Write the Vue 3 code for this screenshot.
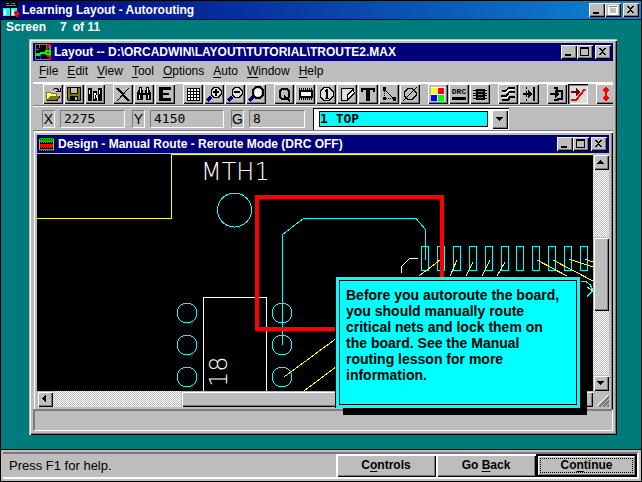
<script setup>
import { ref } from 'vue'

const K = '#000'
const layer = ref('1 TOP')

const menus = [
  ['F', 'ile'], ['E', 'dit'], ['V', 'iew'], ['T', 'ool'],
  ['O', 'ptions'], ['A', 'uto'], ['W', 'indow'], ['H', 'elp'],
]

const lens = [
  { d: 'M7 13L3 17', s: '#00007b', w: 3 },
  { d: 'M10 3.5h4l3 3v4l-3 3h-4l-3-3v-4z', f: '#dedede', s: K, w: 1 },
]

const groups = [
  [
    { label: 'Open', p: [
      { d: 'M3.5 8.5h4l1 1h5v3h-6l-4 4z', f: '#ffff7b', s: '#7b7b00', w: 1 },
      { d: 'M7 12h10l-3 5H3z', f: '#7b7b00' },
      { d: 'M4 16.5h10l3-4', s: K, w: 1 },
      { d: 'M10 6l2-2h2l2 3M17 4v3h-4', s: K, w: 1 } ] },
    { label: 'Save', p: [
      { d: 'M3.5 3.5h13v13h-12l-1-1z', f: '#7b7b00', s: K, w: 1 },
      { d: 'M6.5 3.5h7v6h-7z', f: '#bdbdbd', s: K, w: 1 },
      { d: 'M6 12h8v5H6z', f: K },
      { d: 'M11 13h2v3h-2z', f: '#bdbdbd' } ] },
    { label: 'Library', p: [
      { d: 'M3 4h4v13H3zM8 7h4v10H8zM13 4h4v13h-4z', f: K },
      { d: 'M4 6h1v4H4zM9 9h1v6H9zM14 6h1v4h-1z', f: '#fff' },
      { d: 'M10 9l3 7', s: '#fff', w: 1 } ] },
  ],
  [
    { label: 'Delete', p: [
      { d: 'M4 4L16 17', s: K, w: 2 }, { d: 'M16 4L4 17', s: K, w: 1 } ] },
    { label: 'Find', p: [
      { d: 'M5 3h3v3h1v3h2V6h1V3h3v3h1l1 4v6h-5v-5H9v5H3v-6l1-4h1z', f: K },
      { d: 'M6.500 4v5M5.500 11v4M13.500 4v5M14.500 11v4', s: '#fff', w: 1 } ] },
    { label: 'Edit', p: [ { d: 'M4 3h12v3H8v3h6v2H8v3h8v3H4z', f: K } ] },
  ],
  [
    { label: 'Spreadsheet', p: [
      { d: 'M4.500 4.500h12v12h-12z', f: '#fff', s: K, w: 1 },
      { d: 'M7.500 4v12M10.500 4v12M13.500 4v12M4 7.500h12M4 10.500h12M4 13.500h12', s: K, w: 1 } ] },
    { label: 'Zoom in', p: [ ...lens, { d: 'M11 5h2v2h2v2h-2v3h-2V9H9V7h2z', f: K } ] },
    { label: 'Zoom out', p: [ ...lens, { d: 'M9 7h6v2H9z', f: K } ] },
    { label: 'Zoom all', p: [
      { d: 'M7 13L3 17', s: '#00007b', w: 3 },
      { d: 'M10 3h4l3 3v5l-3 3h-4l-3-3V6z', s: K, w: 2 },
      { d: 'M9 5h6v7H9z', f: '#fff' } ] },
  ],
  [
    { label: 'Query', p: [
      { d: 'M8 5h5l2 2v6l-2 2H8l-2-2V7z', s: K, w: 2 },
      { d: 'M10 12l6 5', s: K, w: 2 } ] },
    { label: 'Component', p: [
      { d: 'M4.500 7h12v6h-12z', f: '#fff', s: K, w: 2 },
      { d: 'M4.500 4v3M6.500 4v3M8.500 4v3M10.500 4v3M12.500 4v3M14.500 4v3M16.500 4v3M4.500 13v3M6.500 13v3M8.500 13v3M10.500 13v3M12.500 13v3M14.500 13v3M16.500 13v3', s: K, w: 1 } ] },
    { label: 'Pin', p: [
      { d: 'M8 3.500h5l4 4v5l-4 4H8l-4-4v-5z', f: '#dedede', s: K, w: 1 },
      { d: 'M10 5h2v9h1v1H9v-1h1V8H9V6h1z', f: K } ] },
    { label: 'Obstacle', p: [
      { d: 'M4.500 4.500h12v6l-6 6h-6z', f: '#dedede', s: K, w: 1 },
      { d: 'M10.500 15v-4l5-5 2 3-5 5z', f: '#fff', s: K, w: 1 } ] },
    { label: 'Text', p: [ { d: 'M3 4h14v4h-2V6h-3v11H8V6H5v2H3z', f: K } ] },
    { label: 'Connection', p: [
      { d: 'M4 3h3v4H4zM4 13h3v3H4zM14 13h3v4h-3z', f: K },
      { d: 'M5.500 7v6M7 14.500h7', s: K, w: 1, dash: '1 1' },
      { d: 'M6 6l9 9', s: K, w: 1 } ] },
    { label: 'Error', p: [
      { d: 'M8 4.500h4l4 4v3l-4 4H8l-4-4v-3z', s: K, w: 1 }, { d: 'M3 17L17 3', s: K, w: 1 } ] },
  ],
  [
    { label: 'Color', p: [
      { d: 'M3 3h14v14H3z', f: '#fff' },
      { d: 'M3 4h6v6H3z', f: '#ff0' }, { d: 'M10 4h6v6h-6z', f: '#f00' },
      { d: 'M3 11h6v6H3z', f: '#00f' }, { d: 'M10 11h6v6h-6z', f: '#0f0' } ] },
    { label: 'Online DRC', text: 'DRC', p: [ { d: 'M3 13h14v3H3z', f: K } ] },
    { label: 'Reconnect', p: [
      { d: 'M6 5h9v11H6z', f: K },
      { d: 'M3 6.500h14M3 9.500h14M3 11.500h14M3 14.500h14', s: K, w: 1 },
      { d: 'M8 7.500h5M8 10.500h5M8 13.500h5', s: '#7b7b7b', w: 1 } ] },
  ],
  [
    { label: 'Auto path', p: [
      { d: 'M4 7h4l3-3h6M3 12h5l4-4h5M4 16h6l2-3h5', s: K, w: 2 },
      { d: 'M4 8.500h4l3-3h5M4 13.500h5l3-4h4', s: '#fff', w: 1 } ] },
    { label: 'Shove track', p: [
      { d: 'M7.500 3v14', s: K, w: 1, dash: '2 2' }, { d: 'M15 3v14', s: K, w: 2 },
      { d: 'M4 10h6', s: K, w: 2 }, { d: 'M9 6l5 4-5 4z', f: K } ] },
  ],
  [
    { label: 'Edit segment', p: [
      { d: 'M7 4h3v3h5v8h-4v1H7', s: K, w: 2 },
      { d: 'M3 10h6', s: K, w: 2 }, { d: 'M8 6l4 4-4 4z', f: K } ] },
    { label: 'Add or edit route', on: true, p: [
      { d: 'M3 16h5L17 5', s: '#f00', w: 2 },
      { d: 'M3 8h6', s: '#7b0000', w: 2 }, { d: 'M8 4l5 4-5 4z', f: '#7b0000' } ] },
  ],
  [
    { label: 'Design rule check', p: [
      { d: 'M9 3h2v1h1v1h1v2h-1v1h-1v4h1v1h1v2h-1v1h-1v1H9v-1H8v-1H7v-2h1v-1h1V8H8V7H7V5h1V4h1z', f: '#f00' } ] },
  ],
]

const pads = [421, 437, 453, 469, 485, 501, 516, 532, 548, 564, 580]
const pinRows = [313, 345, 377]
const rats = [
  'M419 276L440 260', 'M450 276L457 260', 'M466 276L473 262', 'M482 276L490 260',
  'M497 276L505 262', 'M537 260L567 276', 'M553 260L593 281', 'M569 259L593 267',
  'M585 259L593 262', 'M587 287L593 291', 'M284 377L345 332', 'M304 391L345 360',
]
const captions = [
  { label: 'Minimize', d: 'M4 9h6v2H4z' },
  { label: 'Maximize', d: 'M3 2h9v9H3zM4 4v6h7V4z' },
  { label: 'Close', d: 'M4 3h2v1h1v1h1V4h1V3h2v1h-1v1H9v1H8v1h1v1h1v1h1v1H9V9H8V8H7v1H6v1H4V9h1V8h1V7h1V6H6V5H5V4H4z' },
]
</script>

<template>
  <div class="app">
    <header class="title main-title">
      <svg class="ticon" viewBox="0 0 16 16" shape-rendering="crispEdges">
        <path fill="#000" d="M2 0h13v16H2z" />
        <path fill="#7b7b7b" d="M3 1h3v1H3zM8 1h4v1H8zM3 3h10v1H3z" />
        <path fill="#0ff" d="M0 6h7v8H0zM8 6h6v8H8z" />
        <path fill="#fff" d="M1 7h2v6H1zM9 7h2v6H9z" />
        <path fill="#f00" d="M12 9h3v1h1v3h-1v2h-2v-1h-1v-2h-1v-2h1z" />
      </svg>
      <h1>Learning Layout - Autorouting</h1>
      <div class="captions">
        <button v-for="c in captions" :key="c.label" type="button" :aria-label="c.label" :class="{ dim: c.label === 'Maximize' }">
          <svg viewBox="0 0 16 14" shape-rendering="crispEdges"><path :d="c.d" fill-rule="evenodd" /></svg>
        </button>
      </div>
    </header>

    <main class="desktop">
      <p class="progress"><span>Screen</span><span>7</span><span>of 11</span></p>

      <section class="window">
        <div class="title">
          <svg class="ticon" viewBox="0 0 16 16" shape-rendering="crispEdges">
            <path fill="#7b7b7b" d="M0 0h16v16H0z" />
            <path fill="#000" d="M1 1h13v8H1zM1 10h4v5H1zM6 10h8v5H6z" />
            <path fill="#7b7b7b" d="M4 1h1v3H4zM11 1h1v4h-1zM1 5h3v1H1z" />
            <path fill="none" stroke="#0f0" stroke-width="2" d="M0 11h4l2-2h5M11 7h4v3h-4z" />
            <path fill="none" stroke="#f00" stroke-width="2" d="M15 0l-3 4v2M11 11l4 2v3" />
            <path fill="none" stroke="#00f" stroke-width="2" d="M4 14l3-3" />
          </svg>
          <h2>Layout -- D:\ORCADWIN\LAYOUT\TUTORIAL\TROUTE2.MAX</h2>
          <div class="captions">
            <button v-for="c in captions" :key="c.label" type="button" :aria-label="c.label">
              <svg viewBox="0 0 16 14" shape-rendering="crispEdges"><path :d="c.d" fill-rule="evenodd" /></svg>
            </button>
          </div>
        </div>

        <nav class="menu">
          <a v-for="m in menus" :key="m[1]" href="#"><u>{{ m[0] }}</u>{{ m[1] }}</a>
        </nav>

        <div class="toolbar">
          <div v-for="(g, i) in groups" :key="i" class="group">
            <button v-for="t in g" :key="t.label" type="button" class="tool" :class="{ on: t.on }" :aria-label="t.label">
              <svg viewBox="1 1 18 18" shape-rendering="crispEdges">
                <path
                  v-for="(s, j) in t.p" :key="j" :d="s.d" :fill="s.f || 'none'" :stroke="s.s || 'none'"
                  :stroke-width="s.w || 0" :stroke-dasharray="s.dash"
                />
                <text v-if="t.text" x="10" y="10" text-anchor="middle" class="tooltext">{{ t.text }}</text>
              </svg>
            </button>
          </div>
        </div>

        <div class="fields">
          <label class="tag" for="fx">X</label>
          <input id="fx" class="coord" value="2275" readonly>
          <label class="tag next" for="fy">Y</label>
          <input id="fy" class="coord wide" value="4150" readonly>
          <label class="tag next" for="fg">G</label>
          <input id="fg" class="coord small" value="8" readonly>
          <div class="combo">
            <select v-model="layer" aria-label="Layer">
              <option value="1 TOP">1 TOP</option>
            </select>
            <span class="drop"><svg viewBox="0 0 16 18" shape-rendering="crispEdges"><path d="M4 7h7v1h-1v1H9v1H8v1H7v-1H6V9H5V8H4z" /></svg></span>
          </div>
        </div>

        <section class="child">
          <div class="title">
            <svg class="ticon" viewBox="0 0 16 16" shape-rendering="crispEdges">
              <path fill="#000" d="M1 1h15v15H1z" />
              <path fill="#00bd00" d="M1 2h14v5H1zM1 13h14v2H1z" />
              <path fill="#f00" d="M1 8h14v4H1z" />
              <path stroke="#000" stroke-dasharray="1 1" d="M1 3.500h14M1 6.500h14M1 11.500h14M1 14.500h14" />
              <path fill="#bdbd00" d="M0 3h1v11H0zM14 3h1v11h-1z" />
            </svg>
            <h2>Design - Manual Route - Reroute Mode (DRC OFF)</h2>
            <div class="captions">
              <button v-for="c in captions" :key="c.label" type="button" :aria-label="c.label">
                <svg viewBox="0 0 16 14" shape-rendering="crispEdges"><path :d="c.d" fill-rule="evenodd" /></svg>
              </button>
            </div>
          </div>

          <div class="view">
            <div class="board">
              <svg width="100%" height="100%" shape-rendering="crispEdges" fill="none">
                <g transform="translate(-37 -154)">
                  <path stroke="#ff0" d="M37 218.500H171.500V154.500H2000" />
                  <g fill="#fff" class="silk">
                    <text x="201" y="180">MTH1</text>
                    <text transform="translate(227 387) rotate(-90)">18</text>
                  </g>
                  <path stroke="#fff" d="M203.500 400V297.500H266.500V400M401.500 273V266.500L409.500 258.500H418" />
                  <g stroke="#0ff">
                    <circle cx="234.500" cy="210" r="17" />
                    <template v-for="y in pinRows" :key="y">
                      <circle cx="187" :cy="y" r="10" />
                      <circle cx="282" :cy="y" r="10" />
                    </template>
                    <rect v-for="x in pads" :key="x" :x="x + 0.5" y="246.500" width="7" height="24" />
                    <path d="M282.500 345V234.500L303.500 218.500H416L425.500 229.500V260" />
                    <path d="M581 281.500h5l4 3 2 4v3l-5 5" />
                  </g>
                  <path v-for="r in rats" :key="r" :d="r" stroke="#ff0" />
                  <rect x="257" y="197" width="185" height="132" stroke="#f00" stroke-width="4" />
                </g>
              </svg>
            </div>
            <div class="vbar">
              <button type="button" class="arrow" aria-label="Scroll up"><svg viewBox="0 0 16 16" shape-rendering="crispEdges"><path d="M7 6h1v1h1v1h1v1h1v1H4V9h1V8h1V7h1z" /></svg></button>
              <span class="vthumb"></span>
              <button type="button" class="arrow" aria-label="Scroll down"><svg viewBox="0 0 16 16" shape-rendering="crispEdges"><path d="M4 6h7v1h-1v1H9v1H8v1H7V9H6V8H5V7H4z" /></svg></button>
            </div>
            <div class="hbar">
              <button type="button" class="arrow" aria-label="Scroll left"><svg viewBox="0 0 16 16" shape-rendering="crispEdges"><path d="M8 4h1v7H8v-1H7V9H6V8H5V7h1V6h1V5h1z" /></svg></button>
              <span class="hthumb"></span>
              <button type="button" class="arrow" aria-label="Scroll right"><svg viewBox="0 0 16 16" shape-rendering="crispEdges"><path d="M6 4h1v1h1v1h1v1h1v1H9v1H8v1H7v1H6z" /></svg></button>
            </div>
            <svg class="grip" viewBox="0 0 16 16" shape-rendering="crispEdges">
              <path stroke="#fff" d="M4 15L15 4M8 15l7-7M12 15l3-3" />
              <path stroke="#7b7b7b" stroke-width="2" d="M6 16L16 6M10 16l6-6M14 16l2-2" />
            </svg>
          </div>

          <aside class="note">
            <p>Before you autoroute the board, you should manually route critical nets and lock them on the board. See the Manual routing lesson for more information.</p>
          </aside>
        </section>

        <div class="status"></div>
      </section>
    </main>

    <footer class="footer">
      <p>Press F1 for help.</p>
      <button type="button">C<u>o</u>ntrols</button>
      <button type="button">Go <u>B</u>ack</button>
      <button type="button" class="default"><span>Co<u>n</u>tinue</span></button>
    </footer>
  </div>
</template>

<style>
body { margin: 0; }
</style>

<style scoped>
* { box-sizing: border-box; }
.app {
  display: flex;
  flex-direction: column;
  min-height: 100vh;
  border: 1px solid #000;
  background: #007b7b;
  color: #000;
  font-family: "Liberation Sans", Arial, sans-serif;
  font-size: 12px;
}
h1, h2, p { margin: 0; font-size: 12px; }
button { padding: 0; border: 0; background: #bdbdbd; color: #000; font-family: inherit; }
svg { display: block; }

.title {
  display: flex;
  align-items: center;
  gap: 3px;
  height: 18px;
  padding: 0 2px;
  background: #00007b;
  color: #fff;
}
.title h1, .title h2 { flex: 1; min-width: 0; line-height: 18px; white-space: nowrap; overflow: hidden; }
.main-title { height: 19px; border-bottom: 1px solid #000; background: linear-gradient(90deg, #00007b, #1084d0); }
.ticon { width: 16px; height: 16px; flex: none; }
.captions { display: flex; }
.captions button { width: 16px; height: 14px; box-shadow: inset 1px 1px #fff, inset -1px -1px #000, inset -2px -2px #7b7b7b; }
.captions button:last-child { margin-left: 2px; }
.captions svg { width: 16px; height: 14px; }
.captions .dim path { fill: #7b7b7b; stroke: #fff; stroke-width: 1px; }

.desktop { position: relative; flex: 1; display: flex; padding: 19px 24px 14px 28px; }
.progress {
  position: absolute;
  top: 0;
  left: 5px;
  display: flex;
  color: #fff;
  font-weight: bold;
  line-height: 14px;
}
.progress span { margin-right: 6px; }
.progress span:first-child { margin-right: 14px; }

.window {
  flex: 1;
  min-width: 0;
  display: flex;
  flex-direction: column;
  padding: 4px;
  background: #bdbdbd;
  box-shadow: inset 1px 1px #bdbdbd, inset 2px 2px #fff, inset -1px -1px #000, inset -2px -2px #7b7b7b;
}
.menu { display: flex; gap: 9px; height: 21px; padding-left: 6px; line-height: 21px; }
.menu a { color: #000; text-decoration: none; }
u { text-underline-offset: 2px; }

.toolbar {
  display: flex;
  gap: 7px;
  height: 24px;
  padding-left: 10px;
  border-top: 2px solid #fff;
  border-bottom: 1px solid #7b7b7b;
  overflow: hidden;
}
.group { display: flex; flex: none; }
.tool {
  width: 20px;
  height: 20px;
  margin-right: 1px;
  padding: 1px;
  box-shadow: inset 1px 1px #fff, inset -1px -1px #000, inset -2px -2px #7b7b7b;
}
.tool.on { background: #dedede; box-shadow: inset 1px 1px #000, inset 2px 2px #7b7b7b, inset -1px -1px #fff; }
.tool svg { width: 18px; height: 18px; }
.tooltext { font: bold 8px "Liberation Mono", monospace; fill: #000; }

.fields {
  display: flex;
  align-items: center;
  gap: 5px;
  height: 25px;
  padding-left: 9px;
  border-top: 1px solid #fff;
  border-bottom: 1px solid #7b7b7b;
}
.tag, .coord {
  height: 18px;
  border: 1px solid;
  border-color: #7b7b7b #fff #fff #7b7b7b;
  background: #bdbdbd;
  line-height: 16px;
}
.tag { width: 13px; font-size: 14px; text-align: center; }
.tag.next { margin-left: 2px; }
.coord { width: 65px; padding: 0 3px; border-radius: 0; font: 13px "DejaVu Sans Mono", monospace; color: #000; outline: 0; }
.coord.wide { width: 74px; }
.coord.small { width: 56px; }
.combo {
  display: flex;
  align-items: center;
  justify-content: space-between;
  width: 196px;
  height: 22px;
  margin-left: 3px;
  padding: 0 1px 0 5px;
  border-top: 1px solid #000;
  border-left: 1px solid #000;
  background: #fff;
}
.combo select {
  appearance: none;
  width: 169px;
  height: 16px;
  padding: 0;
  border: 1px solid #000;
  border-radius: 0;
  background: #0ff;
  color: #000;
  font: bold 13px "DejaVu Sans Mono", monospace;
  line-height: 14px;
}
.drop { width: 16px; height: 19px; background: #bdbdbd; box-shadow: inset 1px 1px #fff, inset -1px -1px #000, inset -2px -2px #7b7b7b; }

.child {
  position: relative;
  flex: 1;
  display: flex;
  flex-direction: column;
  padding: 4px 4px 2px;
  box-shadow: inset 1px 0 #bdbdbd, inset 2px 2px #fff, inset -1px 0 #000, inset -2px 0 #7b7b7b;
}
.child .title { margin-bottom: 1px; }
.view { flex: 1; display: grid; grid-template: minmax(0, 1fr) 16px / minmax(0, 1fr) 16px; }
.board { position: relative; background: #000; overflow: hidden; }
.board svg { position: absolute; inset: 0; }
.silk { font: 200 24px "DejaVu Sans", sans-serif; }
.vbar, .hbar {
  display: flex;
  justify-content: space-between;
  background: repeating-conic-gradient(#fff 0 25%, #bdbdbd 0 50%) 0 0 / 2px 2px;
}
.vbar { flex-direction: column; }
.arrow { width: 16px; height: 16px; flex: none; }
.arrow, .vthumb, .hthumb { background: #bdbdbd; box-shadow: inset 1px 1px #bdbdbd, inset 2px 2px #fff, inset -1px -1px #000, inset -2px -2px #7b7b7b; }
.vthumb { height: 74px; margin-bottom: -2px; }
.hthumb { flex: 1; margin-left: 128px; }
.grip { width: 16px; height: 16px; background: #bdbdbd; }

.note {
  position: absolute;
  top: 146px;
  left: 303px;
  width: 244px;
  padding: 3px;
  background: #0ff;
  box-shadow: -1px 0 #000, 7px 7px #000;
}
.note p { padding: 6px 10px 21px 6px; border: 1px solid #000; font-weight: bold; font-size: 14px; line-height: 16px; }

.status { height: 22px; border: 2px solid; border-width: 2px 1px 1px 2px; border-color: #7b7b7b #fff #fff #7b7b7b; }

.footer {
  display: flex;
  height: 32px;
  padding: 2px;
  border-top: 1px solid #000;
  background: #bdbdbd;
}
.footer p { flex: 1; padding-left: 6px; border: 0 solid #fff; border-width: 2px 0; border-top-color: #7b7b7b; font-size: 13px; line-height: 23px; }
.footer button {
  width: 100px;
  border-top: 2px solid #7b7b7b;
  border-bottom: 2px solid #fff;
  font-weight: bold;
  font-size: 12px;
  line-height: 21px;
  box-shadow: inset 1px 1px #fff, inset 2px 2px #fff, inset -1px -1px #000, inset -2px -2px #7b7b7b;
}
.footer .default { padding: 2px; border-right: 2px solid #fff; width: 103px; box-shadow: inset 0 0 0 2px #000, inset 3px 3px #fff, inset -3px -3px #7b7b7b; }
.footer .default span { display: block; margin: 2px; border: 1px dotted #000; line-height: 13px; }
</style>
